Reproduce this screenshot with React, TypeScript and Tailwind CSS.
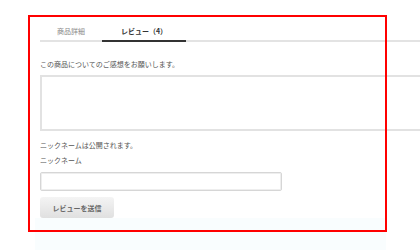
export default function App() {
  return (
    <div
      className="relative w-[420px] h-[250px] overflow-hidden bg-white text-[7px] leading-[10px] text-[#555]"
      style={{ fontFamily: '"Noto Sans CJK JP", "Noto Sans", sans-serif' }}
    >
      <div className="pl-[40px] pt-[22px]">
        {/* Tabs */}
        <div className="flex w-[400px] border-b-2 border-[#e3e3e3]">
          <div className="w-[62px] h-[18px] flex items-center justify-center text-[#8a8a8a]">
            商品詳細
          </div>
          <div className="w-[84px] h-[18px] flex items-center justify-center font-bold text-[#333] -mb-[2px] border-b-2 border-[#333] box-content">
            レビュー（4）
          </div>
        </div>

        {/* Form */}
        <p className="mt-[17px]">この商品についてのご感想をお願いします。</p>
        <textarea className="block mt-[6px] w-[400px] h-[56px] border-2 border-[#e2e2e2] bg-white resize-none outline-none" />

        <p className="mt-[9px]">ニックネームは公開されます。</p>
        <p className="mt-[5px]">ニックネーム</p>
        <input
          type="text"
          className="block mt-[7px] w-[242px] h-[19px] border border-[#d6d6d6] rounded-[2px] bg-white outline-none shadow-[inset_0_0_0_1px_#eee]"
        />
        <button
          type="button"
          className="block mt-[6px] w-[74px] h-[21px] rounded-[3px] bg-gradient-to-b from-[#f4f4f4] to-[#e0e0e0] text-[#666] font-bold"
        >
          レビューを送信
        </button>
      </div>
      <div className="ml-[35px] w-[351px] h-[40px] bg-[#f9fdfe]" />

      {/* highlight frame */}
      <div className="absolute left-[28px] top-[15px] w-[359px] h-[217px] border-2 border-[#ff0000] pointer-events-none" />
    </div>
  );
}
